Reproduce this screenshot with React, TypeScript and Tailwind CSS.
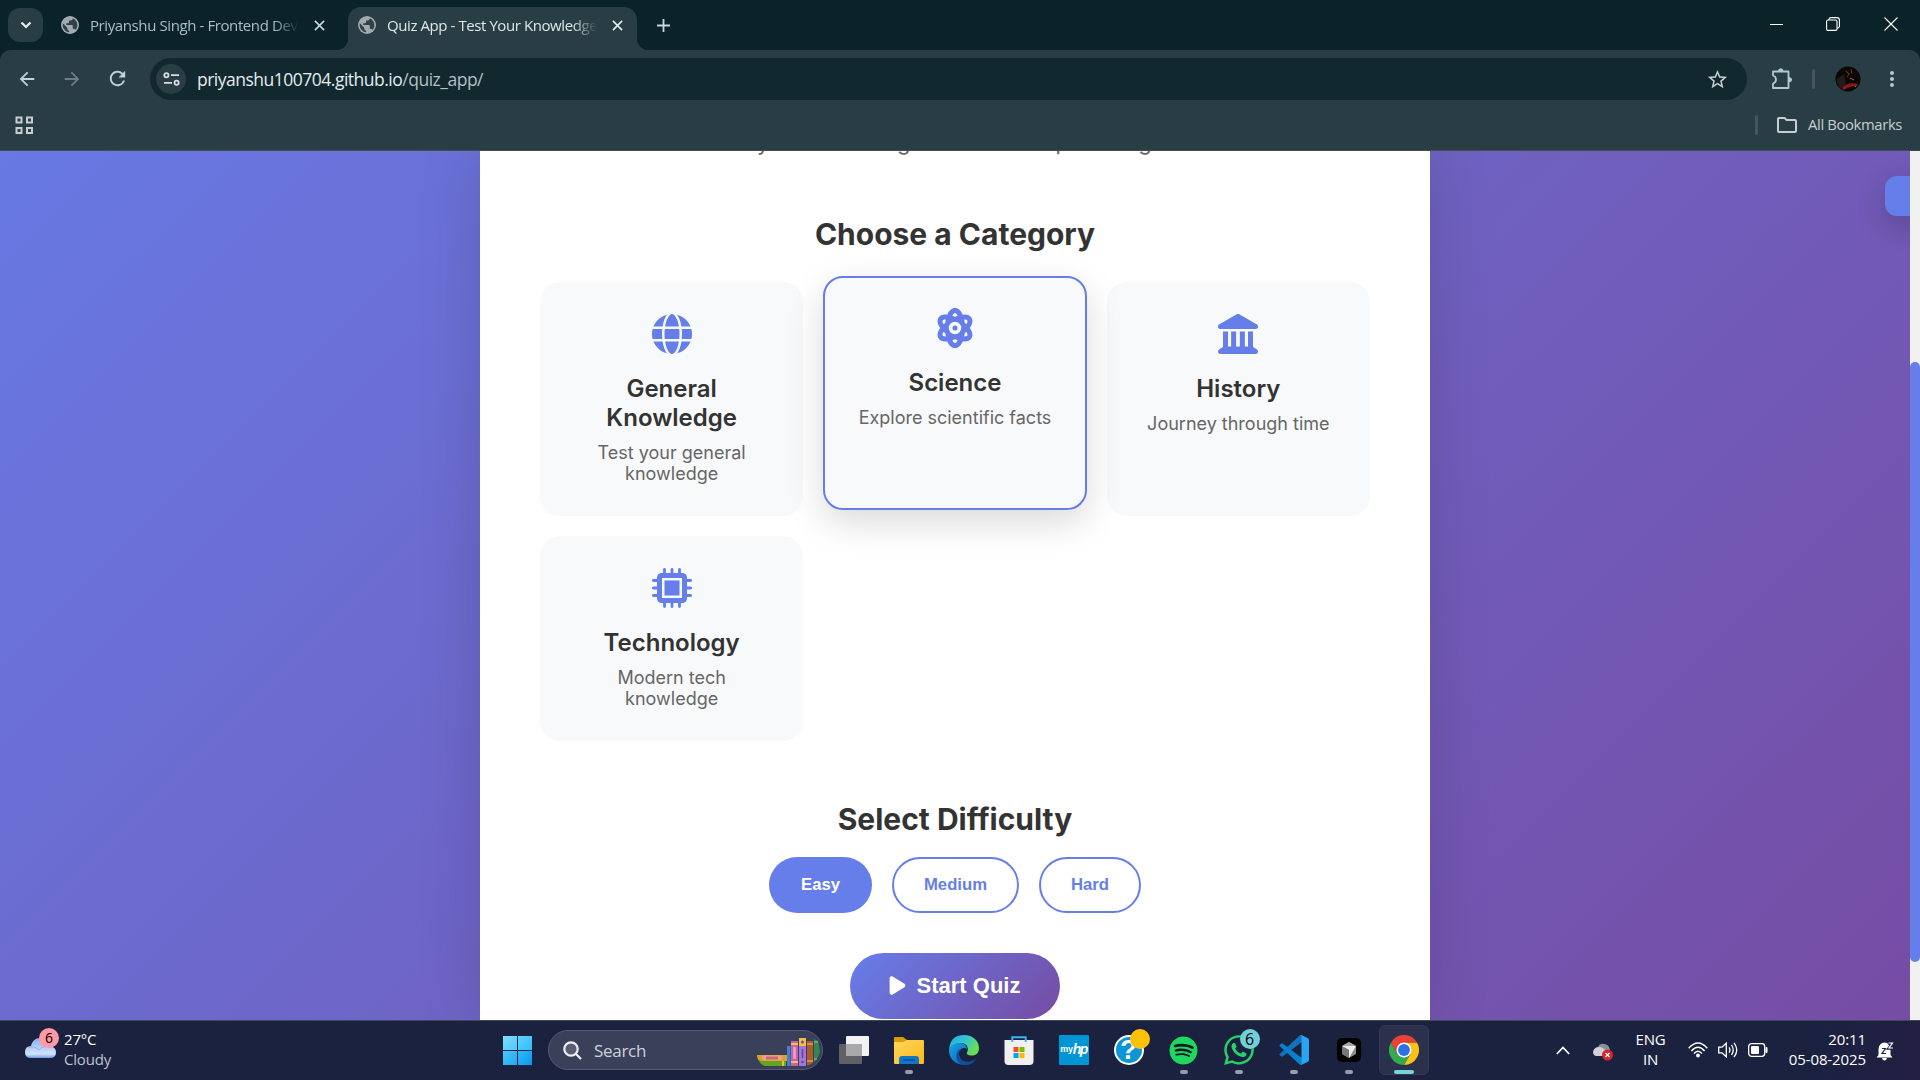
import React from "react";
import { FaGlobe, FaAtom, FaLandmark, FaPlay, FaSpotify, FaWhatsapp } from "react-icons/fa6";
import { MdPublic, MdStarOutline, MdMoreVert, MdOutlineFolder, MdRefresh, MdArrowBack, MdArrowForward } from "react-icons/md";

function Favicon() {
  return (
    <span className="relative flex h-[18px] w-[18px] shrink-0 items-center justify-center overflow-hidden rounded-full bg-[#2c4148]">
      <MdPublic className="h-[22px] w-[22px] shrink-0 text-[#a4a9b0]" />
    </span>
  );
}

function Cross({ className }: { className: string }) {
  return (
    <svg viewBox="0 0 12 12" className={className} fill="none" stroke="currentColor">
      <path d="M1 1L11 11M11 1L1 11" strokeWidth="1.7" />
    </svg>
  );
}

function TabStrip() {
  return (
    <div className="flex h-[50px] w-full items-start bg-[#0a2328] text-[#dfe5e7]">
      <div className="ml-2 mt-2 flex h-[34px] w-[35px] items-center justify-center rounded-xl bg-[#283d44]">
        <svg width="12" height="8" viewBox="0 0 12 8" fill="none" stroke="#e6ecee" strokeWidth="2.2">
          <path d="M1.5 1.5L6 6L10.5 1.5" />
        </svg>
      </div>
      <div className="ml-[18px] flex h-[50px] w-[287px] items-center">
        <Favicon />
        <div className="ml-[11px] w-[209px] whitespace-nowrap text-[15px] tracking-[-0.4px] text-[#a9bfc4] [mask-image:linear-gradient(to_right,#000_88%,transparent)]">
          Priyanshu Singh - Frontend Dev
        </div>
        <Cross className="ml-[15px] h-[11px] w-[11px] text-[#c9dade]" />
      </div>
      <div className="relative mt-[7px] flex h-[43px] w-[289px] items-center rounded-t-[13px] bg-[#283d44] pb-[7px] pl-[10px]">
        <span className="absolute -left-3 bottom-0 h-3 w-3 bg-[radial-gradient(circle_at_0_0,transparent_12px,#283d44_12.5px)]" />
        <span className="absolute -right-3 bottom-0 h-3 w-3 bg-[radial-gradient(circle_at_100%_0,transparent_12px,#283d44_12.5px)]" />
        <Favicon />
        <div className="ml-[11px] w-[210px] whitespace-nowrap text-[15px] tracking-[-0.42px] text-[#dfe7e9] [mask-image:linear-gradient(to_right,#000_88%,transparent)]">
          Quiz App - Test Your Knowledge
        </div>
        <Cross className="ml-[15px] h-[11px] w-[11px] text-[#e6eff1]" />
      </div>
      <svg className="ml-[20px] mt-[19px]" width="13" height="13" viewBox="0 0 13 13" stroke="#c3d8dd" strokeWidth="1.8">
        <path d="M6.5 0V13M0 6.5H13" />
      </svg>
      <div className="ml-auto mt-[17px] flex items-center pr-[22px]">
        <svg width="13" height="13" viewBox="0 0 13 13" stroke="#fff" strokeWidth="1">
          <path d="M0 6.5H13" />
        </svg>
        <svg className="ml-[43px]" width="14" height="14" viewBox="0 0 14 14" fill="none" stroke="#fff" strokeWidth="1.1">
          <rect x="0.6" y="3" width="10.4" height="10.4" rx="1.4" />
          <path d="M3 3V2.2Q3.3 .6 5 .6H11Q13.4 .6 13.4 3V9.5Q13.3 11 11 11.2" />
        </svg>
        <svg className="ml-11" width="14" height="14" viewBox="0 0 14 14" stroke="#fff" strokeWidth="1.1">
          <path d="M.5 .5L13.5 13.5M13.5 .5L.5 13.5" />
        </svg>
      </div>
    </div>
  );
}

function Toolbar() {
  return (
    <div className="bg-[#0a2328]">
      <div className="flex h-[50px] items-center rounded-t-[10px] bg-[#283d44] pt-2">
        <MdArrowBack className="ml-[16px] mt-[-1px] h-[22px] w-[22px] text-[#bcd3d9]" />
        <MdArrowForward className="ml-[23px] mt-[-1px] h-[22px] w-[22px] text-[#6b7e85]" />
        <MdRefresh className="ml-[23px] mt-[-1px] h-[23px] w-[23px] text-[#bcd3d9]" />
        <div className="ml-[21px] flex h-[42px] w-[1597px] items-center rounded-full bg-[#11282e] pl-1.5">
          <div className="flex h-[30px] w-[30px] items-center justify-center rounded-full bg-[#283d44]">
            <svg width="17" height="14" viewBox="0 0 17 14" fill="none" stroke="#d8dfe2" strokeWidth="1.8">
              <circle cx="3.4" cy="3.2" r="2.1" />
              <path d="M8 3.2H16M1 10.8H9" />
              <circle cx="13.6" cy="10.8" r="2.1" />
            </svg>
          </div>
          <div className="ml-[11px] whitespace-nowrap text-[17.5px] tracking-[-0.5px] text-[#e4ecee]">
            priyanshu100704.github.io<span className="text-[#b4bfc4]">/quiz_app/</span>
          </div>
          <MdStarOutline className="ml-auto mr-[18px] h-[23px] w-[23px] text-[#c7cdd0]" />
        </div>
        <svg className="ml-[24px] mt-[-1px]" width="22" height="22" viewBox="0 0 22 22" fill="none" stroke="#aecbd2" strokeWidth="1.8" strokeLinejoin="round">
          <path d="M2 3.500H17.500V20H2V15.500Q5 14.500 5 11.500Q5 8.500 2 7.500Z" />
          <path d="M7 3Q7.500 .2 9.700 .2Q12 .2 12.300 3ZM18 9Q21 9.500 21 11.800Q21 14 18 14.500Z" fill="#aecbd2" stroke="none" />
        </svg>
        <div className="ml-[19px] h-5 w-[3px] rounded bg-[#42565e]" />
        <svg className="ml-[20px]" width="26" height="26" viewBox="0 0 26 26">
          <circle cx="13" cy="13" r="12.5" fill="#0b0706" />
          <path d="M2 13L9 8L11 19L6 23Q1 18 2 13Z" fill="#231b1a" />
          <path d="M11 5L14 8L12 11M16 3L17 8" stroke="#5c3220" strokeWidth="1.2" fill="none" />
          <path d="M7 22Q13 15.500 23 18L22 20Q15 19.500 9 24Z" fill="#8e1618" />
          <path d="M15 12L19 14M20 20L21 21" stroke="#a85030" strokeWidth="1.2" />
        </svg>
        <MdMoreVert className="ml-[19px] h-6 w-6 text-[#aecbd2]" />
      </div>
      <div className="flex h-[51px] items-center border-b border-[#414d52] bg-[#283d44] text-[#c7cdd0]">
        <svg className="ml-[15px]" width="19" height="19" viewBox="0 0 19 19" fill="none" stroke="#c7cdd0" strokeWidth="2">
          <path d="M1.5 1.5H6.5V6.5H1.5ZM12 1.5H17V6.5H12ZM1.5 12H6.5V17H1.5ZM12 12H17V17H12Z" />
        </svg>
        <div className="ml-auto h-5 w-[3px] rounded bg-[#42565e]" />
        <MdOutlineFolder className="ml-[17px] h-[24px] w-[24px]" />
        <div className="-mt-px ml-[9px] mr-[18px] w-[94px] whitespace-nowrap text-[14.8px] tracking-[-0.35px]">All Bookmarks</div>
      </div>
    </div>
  );
}

function Chip({ className }: { className?: string }) {
  return (
    <svg viewBox="0 0 512 512" className={className}>
      <path
        d="M160 18V100M256 18V100M352 18V100M160 412V494M256 412V494M352 412V494M18 160H100M18 256H100M18 352H100M412 160H494M412 256H494M412 352H494"
        stroke="currentColor"
        strokeWidth="36"
        strokeLinecap="round"
      />
      <path
        fill="currentColor"
        fillRule="evenodd"
        d="M128 64H384Q448 64 448 128V384Q448 448 384 448H128Q64 448 64 384V128Q64 64 128 64ZM128 128V384H384V128ZM160 160H352V352H160Z"
      />
    </svg>
  );
}

const categories = [
  { title: "General Knowledge", text: "Test your general knowledge", Icon: FaGlobe, active: false },
  { title: "Science", text: "Explore scientific facts", Icon: FaAtom, active: true },
  { title: "History", text: "Journey through time", Icon: FaLandmark, active: false },
  { title: "Technology", text: "Modern tech knowledge", Icon: Chip, active: false },
];

function QuizPage() {
  return (
    <div className="flex h-[869px] w-full overflow-hidden">
      <div className="relative flex h-full w-[1910px] justify-center overflow-hidden">
        <div className="absolute -top-[305px] left-0 h-[1258px] w-full bg-[linear-gradient(135deg,#667eea_0%,#764ba2_100%)]" />
        <main className="relative h-full w-[950px] bg-white px-[60px] text-center font-[Inter,sans-serif] text-[#333] shadow-[0_0_60px_rgba(0,0,0,0.14)]">
          <p className="-mt-[22px] h-[26px] whitespace-nowrap text-[22px] leading-[26px] text-[#666]">
            Test your knowledge across multiple categories
          </p>
          <h2 className="mt-[60px] text-[30px] font-bold leading-[38px]">Choose a Category</h2>
          <div className="mt-[29px] grid grid-cols-3 gap-5">
            {categories.map(({ title, text, Icon, active }) => (
              <div
                key={title}
                className={
                  active
                    ? "-translate-y-[6px] rounded-[20px] border-2 border-[#667eea] bg-[#f8f9fb] p-[30px] shadow-[0_12px_36px_rgba(0,0,0,0.15)]"
                    : "rounded-[20px] border-2 border-transparent bg-[#f8f9fb] p-[30px]"
                }
              >
                <Icon className="mx-auto h-10 w-10 text-[#667eea]" />
                <h3 className="mt-5 text-[24px] font-semibold leading-[29px]">{title}</h3>
                <p className="-mx-1 mt-2.5 px-1 text-[18px] leading-[21px] text-[#666]">{text}</p>
              </div>
            ))}
          </div>
          <h2 className="mt-[59px] text-[30px] font-bold leading-[38px]">Select Difficulty</h2>
          <div className="mt-[19px] flex justify-center gap-5 font-['Liberation_Sans',Arial,sans-serif] text-[16.7px] font-bold text-[#667eea]">
            <button className="h-14 w-[103px] rounded-full bg-[#667eea] text-white">Easy</button>
            <button className="h-14 w-[127px] rounded-full border-2 border-[#667eea]">Medium</button>
            <button className="h-14 w-[102px] rounded-full border-2 border-[#667eea]">Hard</button>
          </div>
          <button className="mx-auto mt-10 flex h-[66px] w-[210px] items-center justify-center gap-[8px] rounded-full bg-[linear-gradient(135deg,#667eea_0%,#764ba2_100%)] pb-0.5 font-['Liberation_Sans',Arial,sans-serif] text-[22px] font-bold text-white">
            <FaPlay className="-ml-0.5 mr-0.5 h-[21px] w-[19px]" />
            Start Quiz
          </button>
        </main>
        <div className="absolute left-[1885px] top-[25px] h-10 w-20 rounded-[12px] bg-[#667eea] shadow-[0_10px_30px_rgba(0,0,0,0.2)]" />
      </div>
      <div className="h-full w-[10px] bg-[#f1f1f1] pt-[211px]">
        <div className="h-[600px] w-full rounded-[5px] bg-[#667eea]" />
      </div>
    </div>
  );
}

function BooksArt() {
  return (
    <svg width="63" height="29" viewBox="0 0 63 29">
      <path d="M0 17H30V23H3Q0 22 0 17Z" fill="#dca12c" />
      <rect x="5" y="17.500" width="20" height="5" rx="2" fill="#f0a090" />
      <rect x="9" y="18.500" width="12" height="3" fill="#c96a6a" />
      <path d="M2 23H29V28H8Q4 27 2 23Z" fill="#63a51c" />
      <path d="M26 23V28" stroke="#e3c23a" strokeWidth="2" />
      <rect x="30" y="8" width="3.5" height="20" fill="#3f83d8" />
      <rect x="34" y="3" width="7" height="25" fill="#c862a4" />
      <path d="M34 6H41M34 24H41" stroke="#f0c05a" strokeWidth="2" />
      <path d="M37.500 9V21" stroke="#e9a3cd" strokeWidth="2.500" />
      <rect x="42" y="0" width="7" height="28" fill="#a077d8" />
      <rect x="42" y="0" width="7" height="8" fill="#f0bd45" />
      <circle cx="45.500" cy="4" r="1.5" fill="#6a4ca8" />
      <path d="M45.500 11V20" stroke="#6442a8" strokeWidth="1.500" />
      <circle cx="45.500" cy="24" r="1.300" fill="#6442a8" />
      <path d="M50 3H56V25L52 27H50Z" fill="#ad5a2c" />
      <path d="M50 6H56M50 23H56" stroke="#e3a048" strokeWidth="1.5" />
      <path d="M57 1L61 3L63 13Q62 20 57 24Z" fill="#318654" />
      <path d="M57 4H61M57 21H60" stroke="#8fcf9a" strokeWidth="1.200" />
    </svg>
  );
}

function Search() {
  return (
    <div className="flex h-10 w-[275px] items-center rounded-full border border-[#565a70] bg-[#3b405a] pl-[14px]">
      <svg width="19" height="19" viewBox="0 0 19 19" fill="none" stroke="#eef0f5" strokeWidth="2.2">
        <circle cx="8" cy="8" r="6.700" fill="#5a5e74" />
        <path d="M13 13L18 18" />
      </svg>
      <span className="ml-[12px] mt-px text-[17px] tracking-[-0.3px] text-[#cfd1da]">Search</span>
      <span className="ml-auto mr-[2px] mt-1">
        <BooksArt />
      </span>
    </div>
  );
}

function CloudIcon() {
  return (
    <svg width="31" height="20" viewBox="0 0 31 20">
      <defs>
        <linearGradient id="cloud" x1="0" y1="0" x2="0" y2="1">
          <stop offset="0" stopColor="#88aef0" />
          <stop offset=".8" stopColor="#d3e3fb" />
          <stop offset="1" stopColor="#6f9be4" />
        </linearGradient>
      </defs>
      <path d="M6 20Q0 20 0 14Q0 8 6 8Q8 0 15 0Q23 0 24 8Q31 9 31 14Q31 20 25 20Z" fill="url(#cloud)" />
      <path d="M3 10Q9 7 14 12Q18 7 25 9" stroke="#90b4ee" fill="none" />
    </svg>
  );
}

function TaskViewIcon() {
  return (
    <svg width="30" height="30" viewBox="0 0 30 30">
      <rect x="7" y="1" width="23" height="20" rx="1" fill="#f2f2f2" />
      <rect x="0" y="9" width="23" height="20" rx="1" fill="#5f6064" />
      <path d="M7 9H22Q23 9 23 10V21H7Z" fill="#a9a9ab" />
    </svg>
  );
}

function ExplorerIcon() {
  return (
    <svg width="30" height="30" viewBox="0 0 30 30">
      <defs>
        <linearGradient id="folder" x1="0" y1="0" x2="1" y2="1">
          <stop stopColor="#ffd75e" />
          <stop offset="1" stopColor="#fbb918" />
        </linearGradient>
      </defs>
      <path d="M0 3Q0 2 1 2H9L13 5V12H0Z" fill="#dc9a06" />
      <path d="M0 7H9L13 5H29Q30 5 30 6V28Q30 29 29 29H1Q0 29 0 28Z" fill="url(#folder)" />
      <path d="M5 29V24Q5 21 8 21H22Q25 21 25 24V29Z" fill="#1176c8" />
      <path d="M9 25H21" stroke="#0a4d91" strokeWidth="1.5" />
    </svg>
  );
}

function EdgeIcon() {
  return (
    <svg width="30" height="30" viewBox="0 0 30 30">
      <defs>
        <linearGradient id="edgeTop" x1="0" y1="0" x2="1" y2=".5">
          <stop stopColor="#23a7e0" />
          <stop offset=".5" stopColor="#2fc5d5" />
          <stop offset="1" stopColor="#6ade4e" />
        </linearGradient>
        <linearGradient id="edgeLow" x1="0" y1="0" x2="1" y2="1">
          <stop stopColor="#1aa5e8" />
          <stop offset="1" stopColor="#0a5bb5" />
        </linearGradient>
      </defs>
      <path d="M0 15Q1 0 15 0C24 0 30 6 30 13C30 18 27 20.500 23 20.500C19 20.500 17 19 18 17.500C20 15 19 8 12 8Q4 8 0 15Z" fill="url(#edgeTop)" />
      <path d="M0 15Q4 7 11 8C16 8.500 18 11 18 14C14 11 9 15 10 20C11 26 17 29.500 20 29C10 32 0 26 0 15Z" fill="url(#edgeLow)" />
      <path d="M10 18C9 25 18 30 27 24Q23 31 15 30C5 29 6 15 12 14Z" fill="#0c4f9c" />
    </svg>
  );
}

function StoreIcon() {
  return (
    <svg width="30" height="30" viewBox="0 0 30 30">
      <path d="M.5 5H29.500V26Q29.500 30 25.500 30H4.500Q.5 30 .5 26Z" fill="#f0f0f0" />
      <path d="M8.300 7V2.200H21.700V7" stroke="#36b4f2" strokeWidth="2" fill="none" />
      <path d="M9.500 12H14.500V17H9.500Z" fill="#f25022" />
      <path d="M15.500 12H20.500V17H15.500Z" fill="#7fba00" />
      <path d="M9.500 18H14.500V23H9.500Z" fill="#00a4ef" />
      <path d="M15.500 18H20.500V23H15.500Z" fill="#ffb900" />
    </svg>
  );
}

function MyHpIcon() {
  return (
    <span className="flex h-[30px] w-[30px] items-center justify-center rounded-[1px] bg-[#0096d6] pb-0.5 font-['Liberation_Sans',sans-serif] italic leading-none text-white">
      <span className="text-[9px] font-bold not-italic tracking-[-0.3px]">my</span>
      <span className="text-[14px] font-bold tracking-[-1.5px]">hp</span>
    </span>
  );
}

function HelpIcon() {
  return (
    <span className="flex h-[30px] w-[30px] items-center justify-center rounded-full border-2 border-white bg-[#0e95d7] font-['Liberation_Sans',sans-serif] text-[27px] font-bold leading-none text-white">
      ?
    </span>
  );
}

function CursorIcon() {
  return (
    <svg width="24" height="24" viewBox="0 0 24 24">
      <rect width="24" height="24" rx="5" fill="#000" />
      <path d="M12 4L19 8V16L12 20L5 16V8Z" fill="#8d8d8d" />
      <path d="M12 4L19 8L12 12L5 8Z" fill="#a8a8a8" />
      <path d="M5 8L19 8L12 20V12Z" fill="#ededed" />
      <path d="M5 8L12 12V20L5 16Z" fill="#777" />
    </svg>
  );
}

function ChromeIcon() {
  return (
    <svg width="30" height="30" viewBox="0 0 48 48">
      <path d="M24 12H44.800A24 24 0 0 1 24 48L34.400 30Z" fill="#fbc116" />
      <path d="M13.600 30L3.200 12A24 24 0 0 0 24 48L34.400 30Z" fill="#34a853" />
      <path d="M24 12H44.800A24 24 0 0 0 3.200 12L13.600 30Z" fill="#ea4335" />
      <circle cx="24" cy="24" r="12" fill="#fff" />
      <circle cx="24" cy="24" r="9.500" fill="#2b72e8" />
    </svg>
  );
}

function VsCodeIcon() {
  return (
    <svg width="30" height="30" viewBox="0 0 100 100">
      <path d="M96 11L75 1Q71 0 69 2L2 63Q0 65 2 67L8 72Q10 73 12 72L93 11Q96 9 100 13Q99 12 96 11Z" fill="#0f72bd" />
      <path d="M96 89L75 99Q71 100 69 98L2 37Q0 35 2 33L8 28Q10 27 12 28L93 89Q96 91 100 87Q99 88 96 89Z" fill="#0a7fcd" />
      <path d="M75 99Q71 100 69 98Q75 101 75 95V5Q75 0 69 2Q71 0 75 1L96 11Q100 13 100 17V83Q100 87 96 89Z" fill="#29a4ef" />
    </svg>
  );
}

type Task = { name: string; icon: React.ReactNode; dot?: boolean; active?: boolean; badge?: string; badgeClass?: string };

const tasks: Task[] = [
  { name: "view", icon: <TaskViewIcon /> },
  { name: "files", icon: <ExplorerIcon />, dot: true },
  { name: "edge", icon: <EdgeIcon /> },
  { name: "store", icon: <StoreIcon /> },
  { name: "myhp", icon: <MyHpIcon /> },
  { name: "help", icon: <HelpIcon />, badge: "", badgeClass: "bg-[#ffc107]" },
  {
    name: "spotify",
    icon: (
      <span className="flex h-[29px] w-[29px] items-center justify-center rounded-full bg-[#111a22]">
        <FaSpotify className="h-[29px] w-[29px] text-[#1ed760]" />
      </span>
    ),
    dot: true,
  },
  { name: "whatsapp", icon: <FaWhatsapp className="h-[34px] w-[34px] shrink-0 text-[#25d366]" />, dot: true, badge: "6", badgeClass: "bg-[#6fd0d8]" },
  { name: "code", icon: <VsCodeIcon />, dot: true },
  { name: "cursor", icon: <CursorIcon />, dot: true },
  { name: "chrome", icon: <ChromeIcon />, active: true },
];

function Taskbar() {
  return (
    <div className="flex h-[60px] w-full items-center border-t border-[#3c4a55] bg-[linear-gradient(to_right,#1b2240_0%,#1a2240_94%,#221f42_100%)] text-white">
      <div className="relative ml-[25px] mt-[-5px] w-[31px]">
        <CloudIcon />
        <span className="absolute left-[14px] -top-[10px] flex h-5 w-5 items-center justify-center rounded-full bg-[#ff99a4] text-sm leading-none text-black">6</span>
      </div>
      <div className="-mt-[4px] ml-2 w-[60px] text-[15px] leading-5 tracking-[-0.2px]">
        <div>27°C</div>
        <div className="text-[#bfc2cd]">Cloudy</div>
      </div>
      <div className="-mt-px ml-[379px] grid h-[29px] w-[29px] grid-cols-2 gap-px">
        <div className="bg-[linear-gradient(135deg,#80dcff,#4dc8fa)]" />
        <div className="bg-[linear-gradient(135deg,#62d3ff,#30bcf8)]" />
        <div className="bg-[linear-gradient(135deg,#4ac6fb,#22aaf4)]" />
        <div className="bg-[linear-gradient(135deg,#30b9f8,#0a98f0)]" />
      </div>
      <div className="-mt-px ml-4">
        <Search />
      </div>
      <div className="-mt-px ml-[3px] flex">
        {tasks.map((t) => (
          <div key={t.name} className="flex w-[55px] justify-center">
            <div
              className={
                t.active
                  ? "relative flex h-[50px] w-[50px] items-center justify-center rounded-md border border-[#343a54] bg-[#2b314c]"
                  : "relative flex h-[50px] w-[50px] items-center justify-center"
              }
            >
              {t.icon}
              {t.badge !== undefined && (
                <span className={`absolute left-[26px] top-[4px] flex h-5 w-5 items-center justify-center rounded-full text-base leading-none text-black ${t.badgeClass}`}>
                  {t.badge}
                </span>
              )}
              {t.dot && <span className="absolute bottom-px left-[21px] h-1 w-2 rounded-full bg-[#989bab]" />}
              {t.active && <span className="absolute bottom-0 left-[14px] h-1 w-5 rounded-full bg-[#76d3dc]" />}
            </div>
          </div>
        ))}
      </div>
      <svg className="ml-[125px]" width="14" height="9" viewBox="0 0 14 9" fill="none" stroke="#fff" strokeWidth="1.7">
        <path d="M.8 8L7 1.500L13.200 8" />
      </svg>
      <svg className="ml-[23px] mt-[3px]" width="20" height="18" viewBox="0 0 20 18">
        <path d="M5 4Q7 0 11 1Q16 1 17 7L10 9Z" fill="#8b8e99" />
        <path d="M3 13Q0 12 0 9Q1 4 6 4Q10 4 13 8L11 13Z" fill="#cfd1d8" />
        <circle cx="14.500" cy="12" r="5.500" fill="#d8242b" />
        <path d="M12.500 10L16.500 14M16.500 10L12.500 14" stroke="#fff" strokeWidth="1.300" />
      </svg>
      <div className="-mt-[3px] ml-[21px] w-[33px] text-center text-[15px] leading-5 tracking-[-0.2px]">
        <div>ENG</div>
        <div>IN</div>
      </div>
      <svg className="ml-[21px] -mt-px" width="20" height="16" viewBox="0 0 20 16" fill="none" stroke="#fff" strokeWidth="1.500">
        <path d="M.7 6.300Q10-4.300 19.300 6.300M3.400 9Q10 1.500 16.600 9M6 11.500Q10 7 14 11.500" />
        <circle cx="10" cy="13.500" r="1.200" fill="#fff" />
      </svg>
      <svg className="ml-[10px] -mt-px" width="20" height="16" viewBox="0 0 20 16" fill="none" stroke="#fff" strokeWidth="1.300">
        <path d="M.7 5.200H4L8.300 1.200V14.800L4 10.800H.7Z" />
        <path d="M11 5.300Q13 8 11 10.700M13.500 3Q17 8 13.500 13M16 .8Q21.500 8 16 15.200" />
      </svg>
      <svg className="ml-[10px] -mt-px" width="20" height="14" viewBox="0 0 20 14" fill="none">
        <rect x=".7" y=".7" width="16" height="12.600" rx="2.800" stroke="#fff" strokeWidth="1.300" />
        <rect x="3" y="3" width="8" height="8" rx="1" fill="#fff" />
        <path d="M18.500 5V9" stroke="#fff" strokeWidth="2" strokeLinecap="round" />
      </svg>
      <div className="-mt-[4px] ml-[17px] w-[81px] whitespace-nowrap text-right text-[15px] leading-5 tracking-[-0.1px]">
        <div>20:11</div>
        <div>05-08-2025</div>
      </div>
      <svg className="ml-[10px]" width="19" height="20" viewBox="0 0 19 20">
        <path d="M2.500 14V8Q3 2 8.500 1.500Q14 2 14.500 8V14L16.500 16.500H.5Z" fill="#fff" />
        <path d="M6 17H11Q10.500 19.500 8.500 19.500T6 17Z" fill="#fff" />
        <path d="M6 7.500H9.500L6 12.500H10" stroke="#1a2240" strokeWidth="1.200" fill="none" />
        <path d="M12 2.200H16.500L12.500 7.500H17" stroke="#1a2240" strokeWidth="2.600" fill="none" />
        <path d="M12.500 2H16.500L13 7H17" stroke="#fff" strokeWidth="1.200" fill="none" />
      </svg>
    </div>
  );
}

export default function App() {
  return (
    <div className="flex h-[1080px] w-[1920px] flex-col overflow-hidden font-['Open_Sans','Noto_Sans',sans-serif]">
      <TabStrip />
      <Toolbar />
      <QuizPage />
      <Taskbar />
    </div>
  );
}
